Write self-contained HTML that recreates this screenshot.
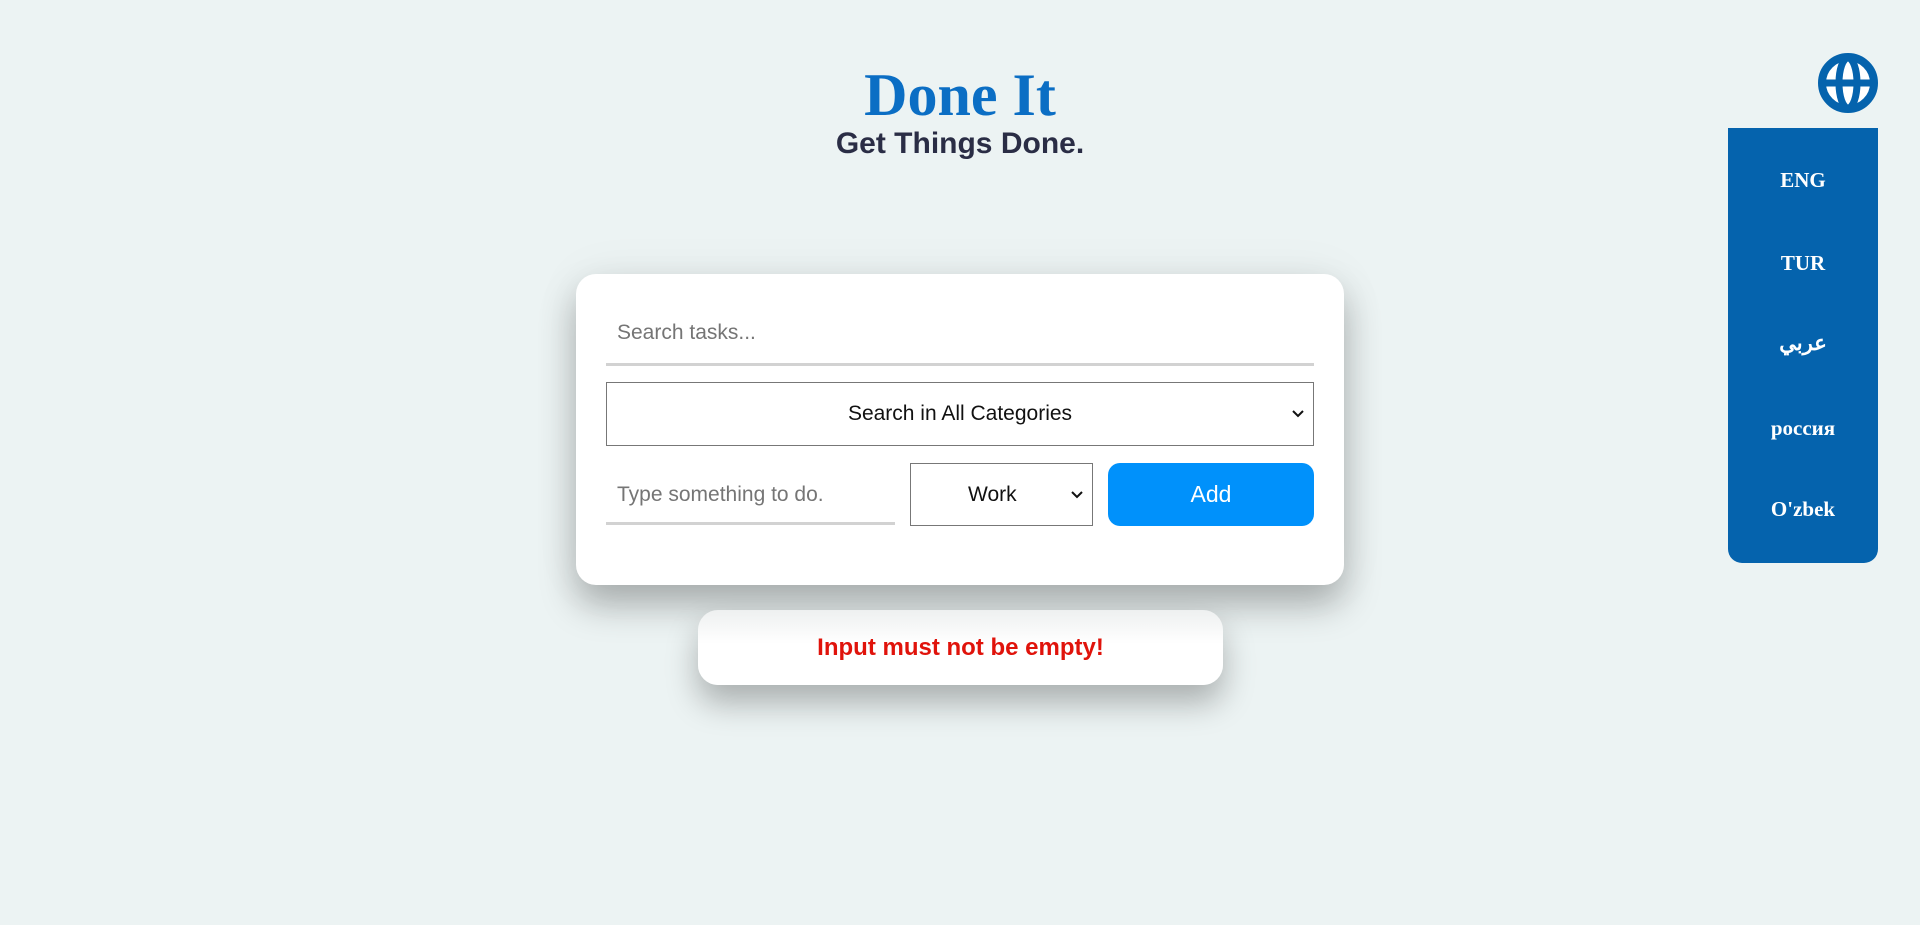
<!DOCTYPE html>
<html><head><meta charset="utf-8"><style>
*{box-sizing:border-box;margin:0;padding:0}
body{width:1920px;height:925px;background:#ecf3f3;position:relative;overflow:hidden;font-family:"Liberation Sans",Arial,sans-serif}
h1{position:absolute;left:0;width:1920px;top:60px;text-align:center;font-family:"Liberation Serif",serif;font-weight:bold;font-size:60px;color:#0b6ec4;line-height:70px}
h2{position:absolute;left:0;width:1920px;top:124px;text-align:center;font-size:30px;font-weight:bold;color:#2a2d45;line-height:40px}
.card{position:absolute;left:576px;top:274px;width:768px;height:311px;background:#fff;border-radius:20px;box-shadow:0 20px 36px rgba(0,0,0,.28),0 0 50px rgba(0,0,0,.05)}
.ph{position:absolute;font-size:21px;color:#757575;display:flex;align-items:center}
.line{position:absolute;height:3px;background:#d2d2d2}
.sel{position:absolute;border:1px solid #777;background:#fff;font-size:21px;color:#111;display:flex;align-items:center;justify-content:center}
.sel svg{position:absolute;right:8px;top:50%;margin-top:-5px}
.add{position:absolute;left:1108px;top:463px;width:206px;height:63px;background:#0091fb;border-radius:12px;color:#fff;font-size:23px;display:flex;align-items:center;justify-content:center}
.toast{position:absolute;left:698px;top:610px;width:525px;height:75px;background:linear-gradient(#eef0f0,#fff 45%);border-radius:20px;box-shadow:0 18px 32px rgba(0,0,0,.28);color:#e0130b;font-weight:bold;font-size:24px;display:flex;align-items:center;justify-content:center}
.globe{position:absolute;left:1818px;top:53px}
.panel{position:absolute;left:1728px;top:128px;width:150px;height:435px;background:#0563ad;border-radius:0 0 14px 14px;color:#fff;font-family:"Liberation Serif","DejaVu Serif",serif;font-weight:bold;font-size:21px;text-align:center}
.panel div{position:absolute;left:0;width:150px;line-height:24px}
</style></head><body>
<h1>Done It</h1>
<h2>Get Things Done.</h2>
<div class="card"></div>
<div class="ph" style="left:617px;top:313px;height:40px">Search tasks...</div>
<div class="line" style="left:606px;top:363px;width:708px"></div>
<div class="sel" style="left:606px;top:382px;width:708px;height:64px">Search in All Categories<svg width="14" height="10" viewBox="0 0 14 10"><path d="M2 2l5 5 5-5" fill="none" stroke="#111" stroke-width="2"/></svg></div>
<div class="ph" style="left:617px;top:463px;height:63px">Type something to do.</div>
<div class="line" style="left:606px;top:522px;width:289px"></div>
<div class="sel" style="left:910px;top:463px;width:183px;height:63px;justify-content:flex-start;padding-left:57px">Work<svg width="14" height="10" viewBox="0 0 14 10"><path d="M2 2l5 5 5-5" fill="none" stroke="#111" stroke-width="2"/></svg></div>
<div class="add">Add</div>
<div class="toast">Input must not be empty!</div>
<svg class="globe" width="60" height="60" viewBox="0 0 60 60"><circle cx="30" cy="30" r="26" fill="#fff" stroke="#0563ad" stroke-width="8"/><ellipse cx="30" cy="30" rx="9" ry="25" fill="none" stroke="#0563ad" stroke-width="7"/><line x1="4" y1="30" x2="56" y2="30" stroke="#0563ad" stroke-width="7"/></svg>
<div class="panel">
<div style="top:40px">ENG</div>
<div style="top:123px">TUR</div>
<div style="top:203px">عربي</div>
<div style="top:288px">россия</div>
<div style="top:369px">O'zbek</div>
</div>
</body></html>
